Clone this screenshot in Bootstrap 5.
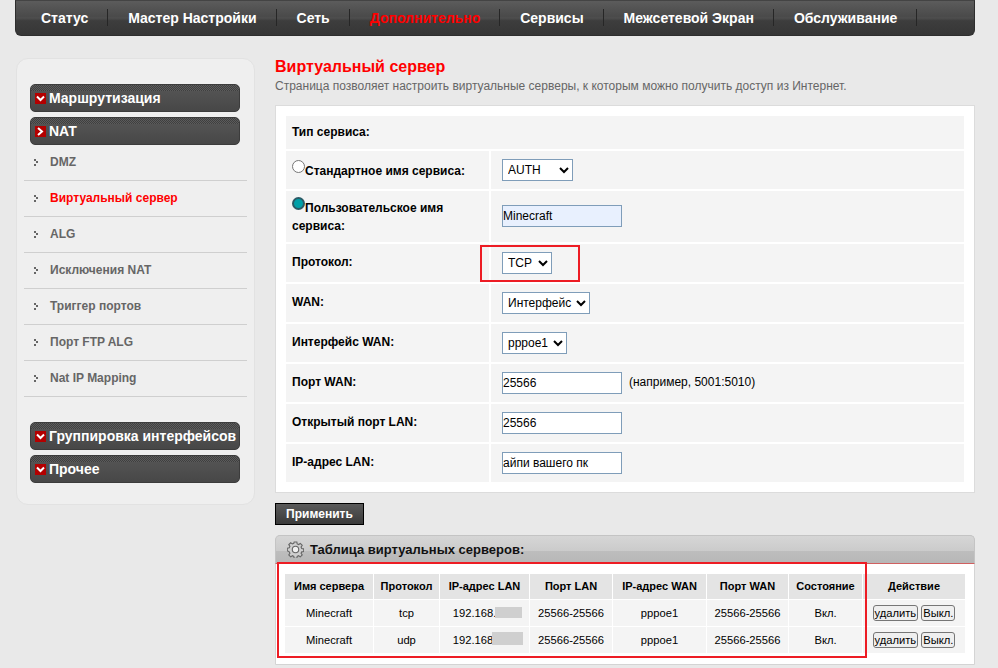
<!DOCTYPE html>
<html lang="ru">
<head>
<meta charset="utf-8">
<title>Виртуальный сервер</title>
<link href="https://cdn.jsdelivr.net/npm/bootstrap@5.3.0/dist/css/bootstrap.min.css" rel="stylesheet">
<style>
html,body{height:100%;}
body{background:#e9e9e9;font-family:"Liberation Sans",Arial,sans-serif;font-size:12px;color:#000;overflow:hidden;position:relative;}
.topbar{margin:0 23px 0 15px;height:36px;border-radius:0 0 6px 6px;background:linear-gradient(#5c5c5c 0,#4a4a4a 45%,#4e4e4e 50%,#3d3d3d 58%,#363636 100%);border:1px solid #2e2e2e;border-top-color:#444;padding-left:5px;}
.topitem{display:block;padding:0 19px 0 20px;height:17px;line-height:18px;margin-top:8px;font-size:14px;font-weight:700;color:#fff;border-right:1px solid #262626;text-decoration:none;white-space:nowrap;}
.topitem.cur{color:#f00;}
.shell{padding:22px 23px 0 16px;}
.sidebox{width:239px;height:447px;background:#efefef;border:1px solid #e2e2e2;border-radius:12px;padding:25px 7px 0;flex:none;}
.grphead{display:flex;align-items:center;margin:0 7px 5px 6px;width:210px;height:28px;border-radius:5px;background:linear-gradient(#565656 0,#4f4f4f 50%,#474747 100%);border:1px solid #3c3c3c;color:#fff;font-size:14px;font-weight:700;padding-left:4px;white-space:nowrap;position:relative;overflow:hidden;}
.grphead::before{content:"";position:absolute;left:0;right:0;top:0;height:6px;background:repeating-conic-gradient(#3f3f3f 0 25%,#5c5c5c 0 50%) 0 0/2px 2px;}
.grpmark{width:11px;height:11px;background:#b30000;margin-right:3px;flex:none;display:flex;align-items:center;justify-content:center;position:relative;}
.grplabel{position:relative;}
.subitem{display:flex;align-items:center;height:36px;border-bottom:1px solid #cfcfcf;color:#666;font-weight:700;font-size:12px;padding:0 0 1px 10px;white-space:nowrap;}
.subitem.cur{color:#f00;}
.subitem svg{margin-right:11px;}
.sublist{margin-bottom:25px;margin-top:-5px;}
.mainpane{margin-left:20px;width:700px;flex:none;}
.pagettl{color:#f00;font-size:16px;font-weight:700;line-height:18px;margin:0 0 3px;}
.pagesub{color:#666;font-size:12px;line-height:14px;margin:0 0 12px;}
.formbox{background:#fff;border:1px solid #dcdcdc;height:388px;padding:8px;}
.formgrid{border-collapse:separate;border-spacing:2px;width:682px;}
.formgrid td{background:#f4f4f4;font-weight:700;padding:0 6px 2px;}
.formgrid td.val{font-weight:400;padding:0 11px;}
.formgrid td.rdocell{padding:2px 6px 0;}
.formgrid td.rdocell2{padding:0 6px;}
.formgrid td.val3{padding-bottom:2px;}
.lblcell{width:203px;line-height:18px;}
.formgrid select,.formgrid input[type=text]{font-family:inherit;font-size:12px;height:22px;border:1px solid #7f9db9;background:#fff;color:#000;vertical-align:middle;border-radius:0;padding:0;}
.formgrid select{padding-left:1px;}
.formgrid input[type=text]{width:120px;}
.formgrid input.filled{background:#e8f0fe;}
.hintnote{margin-left:7px;}
.rdo{appearance:none;-webkit-appearance:none;width:13px;height:13px;border-radius:50%;border:1px solid #767676;background:#fff;vertical-align:2px;margin:-4px 0 0;}
.rdo:checked{background:#00a0a8;border:2px solid #2b5a66;}
.applybtn{display:block;margin-top:10px;height:22px;width:89px;padding:0;border:1px solid #000;border-radius:0;background:linear-gradient(#5a5a5a,#3a3a3a);color:#fff;font-weight:700;font-size:12px;font-family:inherit;}
.listbox{margin-top:10px;border:1px solid #d4d4d4;border-radius:6px 6px 0 0;background:#fff;height:130px;}
.listhead{height:29px;background:linear-gradient(#d6d6d6 0,#cbcbcb 55%,#bdbdbd 56%,#b7b7b7 100%);border-radius:5px 5px 0 0;font-size:13px;font-weight:700;color:#111;padding-left:11px;margin:-1px -1px 0;border:1px solid #c4c4c4;border-bottom-color:#d06060;}
.listhead svg{margin-right:6px;}
.srvgrid{border-collapse:separate;border-spacing:1px;margin:9px 0 0 8px;width:682px;text-align:center;font-size:11.2px;}
.srvgrid th{background:#e4e4e4;height:25px;font-weight:700;font-size:11px;padding:0;}
.srvgrid td{background:#f4f4f4;height:26px;padding:0;}
.srvgrid td.ipa{padding-right:20px;}
.srvgrid td.ipb{padding-right:23px;}
.actbtn{font-family:inherit;font-size:11.2px;height:16px;line-height:13px;padding:0 1px;border:1px solid #767676;border-radius:3px;background:#efefef;color:#000;}
.redframe{position:absolute;border:2px solid #ed1c24;pointer-events:none;}
.blurpatch{position:absolute;background:#cfcfcf;}
#rf1{left:480px;top:245px;width:100px;height:37px;}
#rf2{left:277px;top:562px;width:590px;height:96px;}
#bp1{left:495px;top:607px;width:27px;height:11px;}
#bp2{left:492px;top:632px;width:31px;height:13px;}
</style>
</head>
<body>
<nav class="topbar d-flex">
  <a class="topitem" href="#">Статус</a>
  <a class="topitem" href="#">Мастер Настройки</a>
  <a class="topitem" href="#">Сеть</a>
  <a class="topitem cur" href="#">Дополнительно</a>
  <a class="topitem" href="#">Сервисы</a>
  <a class="topitem" href="#">Межсетевой Экран</a>
  <a class="topitem" href="#">Обслуживание</a>
</nav>
<div class="shell d-flex">
  <aside class="sidebox">
    <div class="grphead"><span class="grpmark"><svg width="9" height="7" viewBox="0 0 9 7"><path d="M1 1.5l3.5 3.5L8 1.5" fill="none" stroke="#fff" stroke-width="2"/></svg></span><span class="grplabel">Маршрутизация</span></div>
    <div class="grphead"><span class="grpmark"><svg width="7" height="9" viewBox="0 0 7 9"><path d="M1 1l4 3.5L1 8" fill="none" stroke="#fff" stroke-width="2"/></svg></span><span class="grplabel">NAT</span></div>
    <div class="sublist">
      <div class="subitem"><svg width="5" height="7" viewBox="0 0 5 7"><path d="M0 0h2v2H0zM2 2h2v2H2zM0 5h2v2H0z" fill="#666"/></svg>DMZ</div>
      <div class="subitem cur"><svg width="5" height="7" viewBox="0 0 5 7"><path d="M0 0h2v2H0zM2 2h2v2H2zM0 5h2v2H0z" fill="#666"/></svg>Виртуальный сервер</div>
      <div class="subitem"><svg width="5" height="7" viewBox="0 0 5 7"><path d="M0 0h2v2H0zM2 2h2v2H2zM0 5h2v2H0z" fill="#666"/></svg>ALG</div>
      <div class="subitem"><svg width="5" height="7" viewBox="0 0 5 7"><path d="M0 0h2v2H0zM2 2h2v2H2zM0 5h2v2H0z" fill="#666"/></svg>Исключения NAT</div>
      <div class="subitem"><svg width="5" height="7" viewBox="0 0 5 7"><path d="M0 0h2v2H0zM2 2h2v2H2zM0 5h2v2H0z" fill="#666"/></svg>Триггер портов</div>
      <div class="subitem"><svg width="5" height="7" viewBox="0 0 5 7"><path d="M0 0h2v2H0zM2 2h2v2H2zM0 5h2v2H0z" fill="#666"/></svg>Порт FTP ALG</div>
      <div class="subitem"><svg width="5" height="7" viewBox="0 0 5 7"><path d="M0 0h2v2H0zM2 2h2v2H2zM0 5h2v2H0z" fill="#666"/></svg>Nat IP Mapping</div>
    </div>
    <div class="grphead"><span class="grpmark"><svg width="9" height="7" viewBox="0 0 9 7"><path d="M1 1.5l3.5 3.5L8 1.5" fill="none" stroke="#fff" stroke-width="2"/></svg></span><span class="grplabel">Группировка интерфейсов</span></div>
    <div class="grphead"><span class="grpmark"><svg width="9" height="7" viewBox="0 0 9 7"><path d="M1 1.5l3.5 3.5L8 1.5" fill="none" stroke="#fff" stroke-width="2"/></svg></span><span class="grplabel">Прочее</span></div>
  </aside>
  <main class="mainpane">
    <h1 class="pagettl">Виртуальный сервер</h1>
    <p class="pagesub">Страница позволяет настроить виртуальные серверы, к которым можно получить доступ из Интернет.</p>
    <div class="formbox">
      <table class="formgrid">
        <tr style="height:33px"><td colspan="2">Тип сервиса:</td></tr>
        <tr style="height:38px"><td class="lblcell rdocell"><input class="rdo" type="radio" name="svc">Стандартное имя сервиса:</td><td class="val"><select style="width:71px"><option>AUTH</option></select></td></tr>
        <tr style="height:51px"><td class="lblcell rdocell2"><input class="rdo" type="radio" name="svc" checked>Пользовательское имя сервиса:</td><td class="val val3"><input class="filled" type="text" value="Minecraft"></td></tr>
        <tr style="height:38px"><td class="lblcell">Протокол:</td><td class="val"><select style="width:50px"><option>TCP</option></select></td></tr>
        <tr style="height:38px"><td class="lblcell">WAN:</td><td class="val"><select style="width:88px"><option>Интерфейс</option></select></td></tr>
        <tr style="height:38px"><td class="lblcell">Интерфейс WAN:</td><td class="val"><select style="width:65px"><option>pppoe1</option></select></td></tr>
        <tr style="height:38px"><td class="lblcell">Порт WAN:</td><td class="val"><input type="text" value="25566"><span class="hintnote">(например, 5001:5010)</span></td></tr>
        <tr style="height:38px"><td class="lblcell">Открытый порт LAN:</td><td class="val"><input type="text" value="25566"></td></tr>
        <tr style="height:38px"><td class="lblcell">IP-адрес LAN:</td><td class="val"><input type="text" value="айпи вашего пк"></td></tr>
      </table>
    </div>
    <button class="applybtn" type="button">Применить</button>
    <section class="listbox">
      <div class="listhead d-flex align-items-center">
        <svg width="17" height="17" viewBox="0 0 18 18"><path d="M7.6 1h2.8l.4 2.1 1.5.7 1.8-1.2 2 2-1.2 1.8.7 1.5 2.1.4v2.8l-2.1.4-.7 1.5 1.2 1.8-2 2-1.8-1.2-1.5.7-.4 2.1H7.6l-.4-2.1-1.5-.7-1.8 1.2-2-2 1.2-1.8-.7-1.5L.3 10.4V7.6l2.1-.4.7-1.5-1.2-1.8 2-2 1.8 1.2 1.5-.7z" fill="#cfcfcf" stroke="#666" stroke-width="1.2"/><circle cx="9" cy="9" r="3.4" fill="#f0f0f0" stroke="#666" stroke-width="1.2"/></svg>
        Таблица виртуальных серверов:
      </div>
      <table class="srvgrid">
        <tr><th style="width:88px">Имя сервера</th><th style="width:65px">Протокол</th><th style="width:89px">IP-адрес LAN</th><th style="width:82px">Порт LAN</th><th style="width:93px">IP-адрес WAN</th><th style="width:81px">Порт WAN</th><th style="width:73px">Состояние</th><th>Действие</th></tr>
        <tr><td>Minecraft</td><td>tcp</td><td class="ipa">192.168.</td><td>25566-25566</td><td>pppoe1</td><td>25566-25566</td><td>Вкл.</td><td><button class="actbtn" type="button">удалить</button> <button class="actbtn" type="button">Выкл.</button></td></tr>
        <tr><td>Minecraft</td><td>udp</td><td class="ipb">192.168</td><td>25566-25566</td><td>pppoe1</td><td>25566-25566</td><td>Вкл.</td><td><button class="actbtn" type="button">удалить</button> <button class="actbtn" type="button">Выкл.</button></td></tr>
      </table>
    </section>
  </main>
</div>
<div class="redframe" id="rf1"></div>
<div class="redframe" id="rf2"></div>
<div class="blurpatch" id="bp1"></div>
<div class="blurpatch" id="bp2"></div>
</body>
</html>
